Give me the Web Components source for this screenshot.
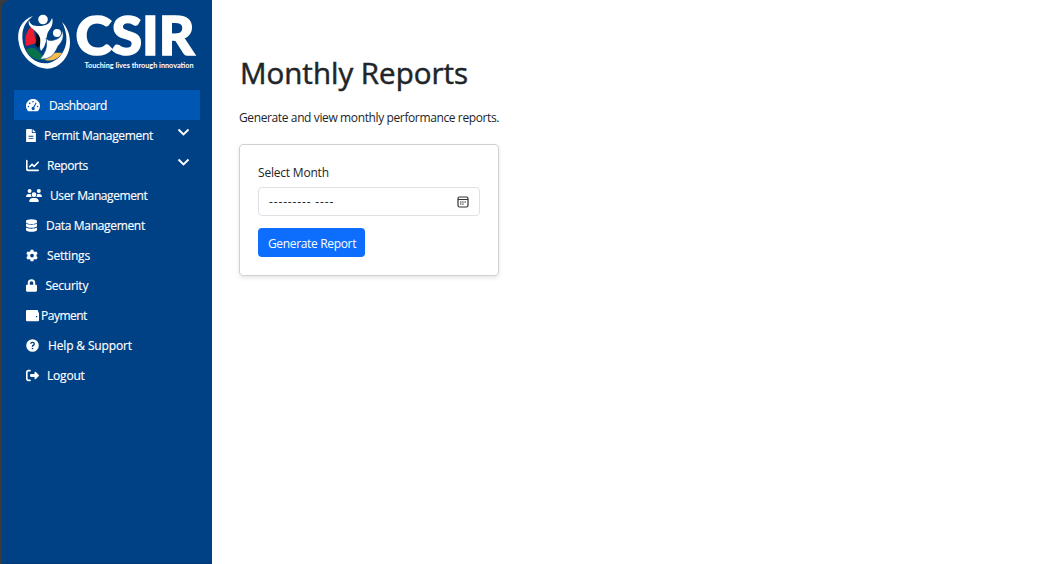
<!DOCTYPE html>
<html lang="en"><head><meta charset="utf-8"><title>Monthly Reports</title>
<style>html,body{margin:0;height:100%;background:#fff}body{font-family:"Open Sans","Noto Sans",sans-serif;color:#212529;overflow:hidden}</style></head><body>
<app-shell>
<side-bar slot="side">
<csir-logo></csir-logo>
<nav-item icon="gauge" active gap="9" ls="-.45">Dashboard</nav-item>
<nav-item icon="file" gap="8" ls="-.34">Permit Management</nav-item>
<nav-item icon="chart" gap="8" ls="-.4">Reports</nav-item>
<nav-item icon="users" gap="8" ls="-.4">User Management</nav-item>
<nav-item icon="db" gap="9" ls="-.32">Data Management</nav-item>
<nav-item icon="gear" gap="9" ls="-.2">Settings</nav-item>
<nav-item icon="lock" gap="8.500" ls="-.25">Security</nav-item>
<nav-item icon="wallet" gap="2" ls="-.5">Payment</nav-item>
<nav-item icon="help" gap="9" ls="-.15">Help &amp; Support</nav-item>
<nav-item icon="out" gap="8" ls="-.2">Logout</nav-item>
</side-bar>
<report-page></report-page>
</app-shell>
<script>
const define=(name,html,init)=>customElements.define(name,class extends HTMLElement{
  constructor(){super();this.attachShadow({mode:'open'}).innerHTML=html;}
  connectedCallback(){if(init)init(this,this.shadowRoot);}
});
define('app-shell',`<style>:host{display:flex;height:100vh}main{flex:1;min-width:0}</style><slot name="side"></slot><main><slot></slot></main>`);
define('side-bar',`<style>:host{display:block;box-sizing:border-box;width:212px;height:100%;padding-left:2px;background:#3b3b3b;color:#fff}nav{box-sizing:border-box;height:100%;padding:10px 12px 0;background:#004085;border-radius:8px 0 0 0;border-bottom:1px solid #003a79}</style><nav><slot></slot></nav>`);
define('csir-logo',`<style>:host{display:block;height:80px}svg{display:block;overflow:visible}</style>
<svg width="186" height="64" viewBox="14 10 186 64">
<path d="M33 16C21 20 16 31 19 44c3 14 17 26 31 24.500 12-2 20-14 20-26C70 34 67 27 62 22c5 10 6 20 2 28-5 11-16 16-26 12C28 58 21 47 22.500 33c1-7 4-12 10.500-17z" fill="#fff"/>
<path d="M32 26c-6 5-8 12-6 20l11-3c-3-6-3-11-3-17z" fill="#ed1b2f"/>
<path d="M35 27c7 7 8 14 3 21l-3-3c2-6 2-12 0-18z" fill="#080b15"/>
<path d="M26 50c5-4 10-2 14 3l6 7c-9 1-16-2-20-10z" fill="#08734a"/>
<path d="M45 60c3-6 9-8 17-7-3 5-9 9-17 7z" fill="#f8bb4b"/>
<circle cx="43" cy="19.500" r="4.800" fill="#fff"/><circle cx="57" cy="33" r="4" fill="#fff"/>
<path d="M29 20c1 5 5 6 10 6 7 0 11-2 13-8 2 5-1 10-4 14-2 5-1 9-4 15l-3 4c-2-4 0-9-1-13s-4-6-7-9c-4-3-5-6-4-9z" fill="#fff"/>
<path d="M46 38c2 3 5 3 8 2 5-1 8-4 8-10 3 7 0 12-4 16-3 7-6 12-14 13h-4c5-5 8-12 6-21z" fill="#fff" stroke="#004085" stroke-width=".6"/>
<text x="75.500" y="54.800" textLength="119" lengthAdjust="spacingAndGlyphs" font-family="Lato" font-size="53" font-weight="900" fill="#fff" stroke="#fff" stroke-width="1.600">CSIR</text>
<text x="84.500" y="67.500" textLength="109" lengthAdjust="spacingAndGlyphs" font-family="Lato" font-size="6.600" font-weight="700" fill="#fff">Touching lives through innovation</text>
</svg>`);
const icons={
gauge:[14,'0 0 14 13','M1.300 11A7 7 0 1112.700 11Q12 12.300 11.500 12.300h-9Q2 12.300 1.300 11zM7 2a.8.8 0 100 1.600.8.8 0 000-1.600zM3.700 3.600a.8.8 0 100 1.600.8.8 0 000-1.600zM2.400 6.700a.8.8 0 100 1.600.8.8 0 000-1.600zM11.600 6.700a.8.8 0 100 1.600.8.8 0 000-1.600zM9.700 3.500L7.300 8a1.500 1.500 0 101 .6l2.300-4.500z'],
file:[10,'0 0 384 512','M224 136V0H24C11 0 0 11 0 24v464c0 13 11 24 24 24h336c13 0 24-11 24-24V160H248c-13 0-24-11-24-24zm64 250H96v-34h192zm0-84H96v-34h192zM384 128H256V0z'],
chart:[13,'0 0 512 512','M32 32c18 0 32 14 32 32v320c0 18 14 32 32 32h384c18 0 32 14 32 32s-14 32-32 32H80c-44 0-80-36-80-80V64c0-18 14-32 32-32zm471 119L343 311c-13 12-33 12-46 0l-57-58-73 74c-13 12-33 12-46 0s-12-33 0-46l96-96c13-12 33-12 46 0l57 58 137-138c13-12 33-12 46 0s12 33 0 46z'],
users:[16,'0 0 640 512','M144 0a80 80 0 110 160 80 80 0 010-160zm368 0a80 80 0 110 160 80 80 0 010-160zM0 299c0-59 48-107 107-107h42c16 0 31 4 45 10-5 46 12 85 42 118H21c-12 0-21-10-21-21zm405 21h-1c30-33 47-72 42-118 14-6 29-10 45-10h42c59 0 107 48 107 107 0 11-9 21-21 21zM224 224a96 96 0 11192 0 96 96 0 01-192 0zm-96 261c0-74 60-133 133-133h118c73 0 133 59 133 133 0 15-12 27-27 27H155c-15 0-27-12-27-27z'],
db:[11,'0 0 448 512','M448 73v46c0 40-100 73-224 73S0 159 0 119V73C0 33 100 0 224 0s224 33 224 73zm0 103v103c0 40-100 73-224 73S0 319 0 279V176c48 33 136 48 224 48s176-15 224-48zm0 160v103c0 40-100 73-224 73S0 479 0 439V336c48 33 136 48 224 48s176-15 224-48z'],
gear:[12,'0 0 512 512','M487 316l-42-25c4-23 4-47 0-70l42-25c5-3 8-9 6-14-11-36-30-68-55-95-4-4-10-5-15-3l-43 25c-18-15-38-27-60-35V25c0-6-4-11-10-12-36-8-73-8-110 0-5 1-9 6-9 12v49c-22 8-43 20-61 35L88 84c-5-2-11-1-15 3-25 27-44 59-55 95-2 5 0 11 5 14l43 25c-5 23-5 47 0 70l-43 24c-5 3-7 9-5 15 11 35 30 67 55 94 4 4 10 5 15 3l42-25c18 16 39 28 61 35v49c0 6 4 11 10 12 36 8 73 8 109 0 6-1 10-6 10-12v-49c22-8 42-20 60-35l43 25c5 3 11 2 15-3 25-27 44-59 55-94 2-6-1-12-6-14zM256 336a80 80 0 110-160 80 80 0 010 160z'],
lock:[11,'0 0 448 512','M400 224h-24v-72a152 152 0 00-304 0v72H48c-27 0-48 21-48 48v192c0 27 21 48 48 48h352c27 0 48-21 48-48V272c0-27-21-48-48-48zm-104 0H152v-72a72 72 0 01144 0z'],
wallet:[13,'0 0 13 13','M1 1h10q1.200 0 1.200 1v1.300q.8 0 .8 1V11.500q0 .8-1 .8H1Q0 12.300 0 11.300V2q0-1 1-1zM10 7v1.200h1.200V7z'],
help:[13,'0 0 512 512','M504 256a248 248 0 11-496 0 248 248 0 01496 0zM262 110c-54 0-85 23-100 64l42 20c10-22 25-35 53-35 20 0 40 13 40 33 0 15-12 22-30 34-20 13-38 30-38 66v10h52v-6c0-29 70-40 70-104 0-49-40-82-89-82zm-6 232a33 33 0 100 66 33 33 0 000-66z'],
out:[13,'0 0 512 512','M505 273L377 401c-15 15-41 5-41-17v-72H192c-18 0-32-14-32-32v-48c0-18 14-32 32-32h144v-72c0-22 26-32 41-17l128 128c9 9 9 25 0 34zM160 96H96c-18 0-32 14-32 32v256c0 18 14 32 32 32h64c18 0 32 14 32 32s-14 32-32 32H96c-53 0-96-43-96-96V128c0-53 43-96 96-96h64c18 0 32 14 32 32s-14 32-32 32z']};
define('nav-item',`<style>:host{display:flex;align-items:center;box-sizing:border-box;height:30px;padding:1px 10px 0 12px;font-size:12px;line-height:18px;white-space:nowrap;-webkit-text-stroke:.15px #fff}:host([active]){background:#0056b3}svg{flex:none;fill:currentColor}.more{margin:0 0 8px auto}</style><slot></slot>`,(e,r)=>{
 const [w,box,d]=icons[e.getAttribute('icon')];
 e.style.letterSpacing=e.getAttribute('ls')+'px';
 r.querySelector('slot').insertAdjacentHTML('beforebegin',`<svg width="${w}" height="13" viewBox="${box}" style="margin-right:${e.getAttribute('gap')}px"><path fill-rule="evenodd" d="${d}"/></svg>`);
 if(['file','chart'].includes(e.getAttribute('icon')))r.querySelector('slot').insertAdjacentHTML('afterend','<svg class="more" width="13" height="8" viewBox="0 0 13 8"><path d="M1.500 1.500l5 5 5-5" fill="none" stroke="#fff" stroke-width="1.900"/></svg>');
});
define('month-field',`<style>:host{display:flex;align-items:center;justify-content:space-between;box-sizing:border-box;height:29px;padding:0 10px;border:1px solid #dee2e6;border-radius:4px;font-size:12px}span{letter-spacing:.85px;padding-top:2px}svg{display:block}</style><slot></slot><svg width="12" height="12" viewBox="0 0 12 12"><rect x="1" y="1" width="10" height="10" rx="1.500" fill="none" stroke="#333" stroke-width="1.200"/><path d="M1 3.500h10" stroke="#333"/><path d="M3 6h6M3 8h4" stroke="#333" stroke-dasharray="1.500 .7"/></svg>`);
define('report-card',`<style>:host{display:block;box-sizing:border-box;width:260px;height:132px;padding:18px;border:1px solid #d0d0d0;border-radius:4px;box-shadow:0 2px 4px rgba(0,0,0,.1)}</style><slot></slot>`);
define('report-page',`<style>:host{display:block;padding:55px 0 0 27px;font-size:12px;line-height:18px}h1{margin:0;font-size:29.500px;line-height:36px;font-weight:500;letter-spacing:0;-webkit-text-stroke:.5px #212529;padding-left:1px}p{margin:18px 0 17px;letter-spacing:-.38px;white-space:nowrap}label{display:block;letter-spacing:-.2px;padding-top:1px;margin-bottom:5px}month-field span{letter-spacing:.85px;padding-top:1px}button{display:block;margin-top:12px;width:107px;height:29px;padding:2px 0 0 1px;border:0;border-radius:4px;background:#0d6efd;color:#fff;font:inherit;letter-spacing:-.33px;white-space:nowrap}</style><h1>Monthly Reports</h1><p>Generate and view monthly performance reports.</p><report-card><label>Select Month</label><month-field><span>--------- ----</span></month-field><button>Generate Report</button></report-card>`);
</script></body></html>
